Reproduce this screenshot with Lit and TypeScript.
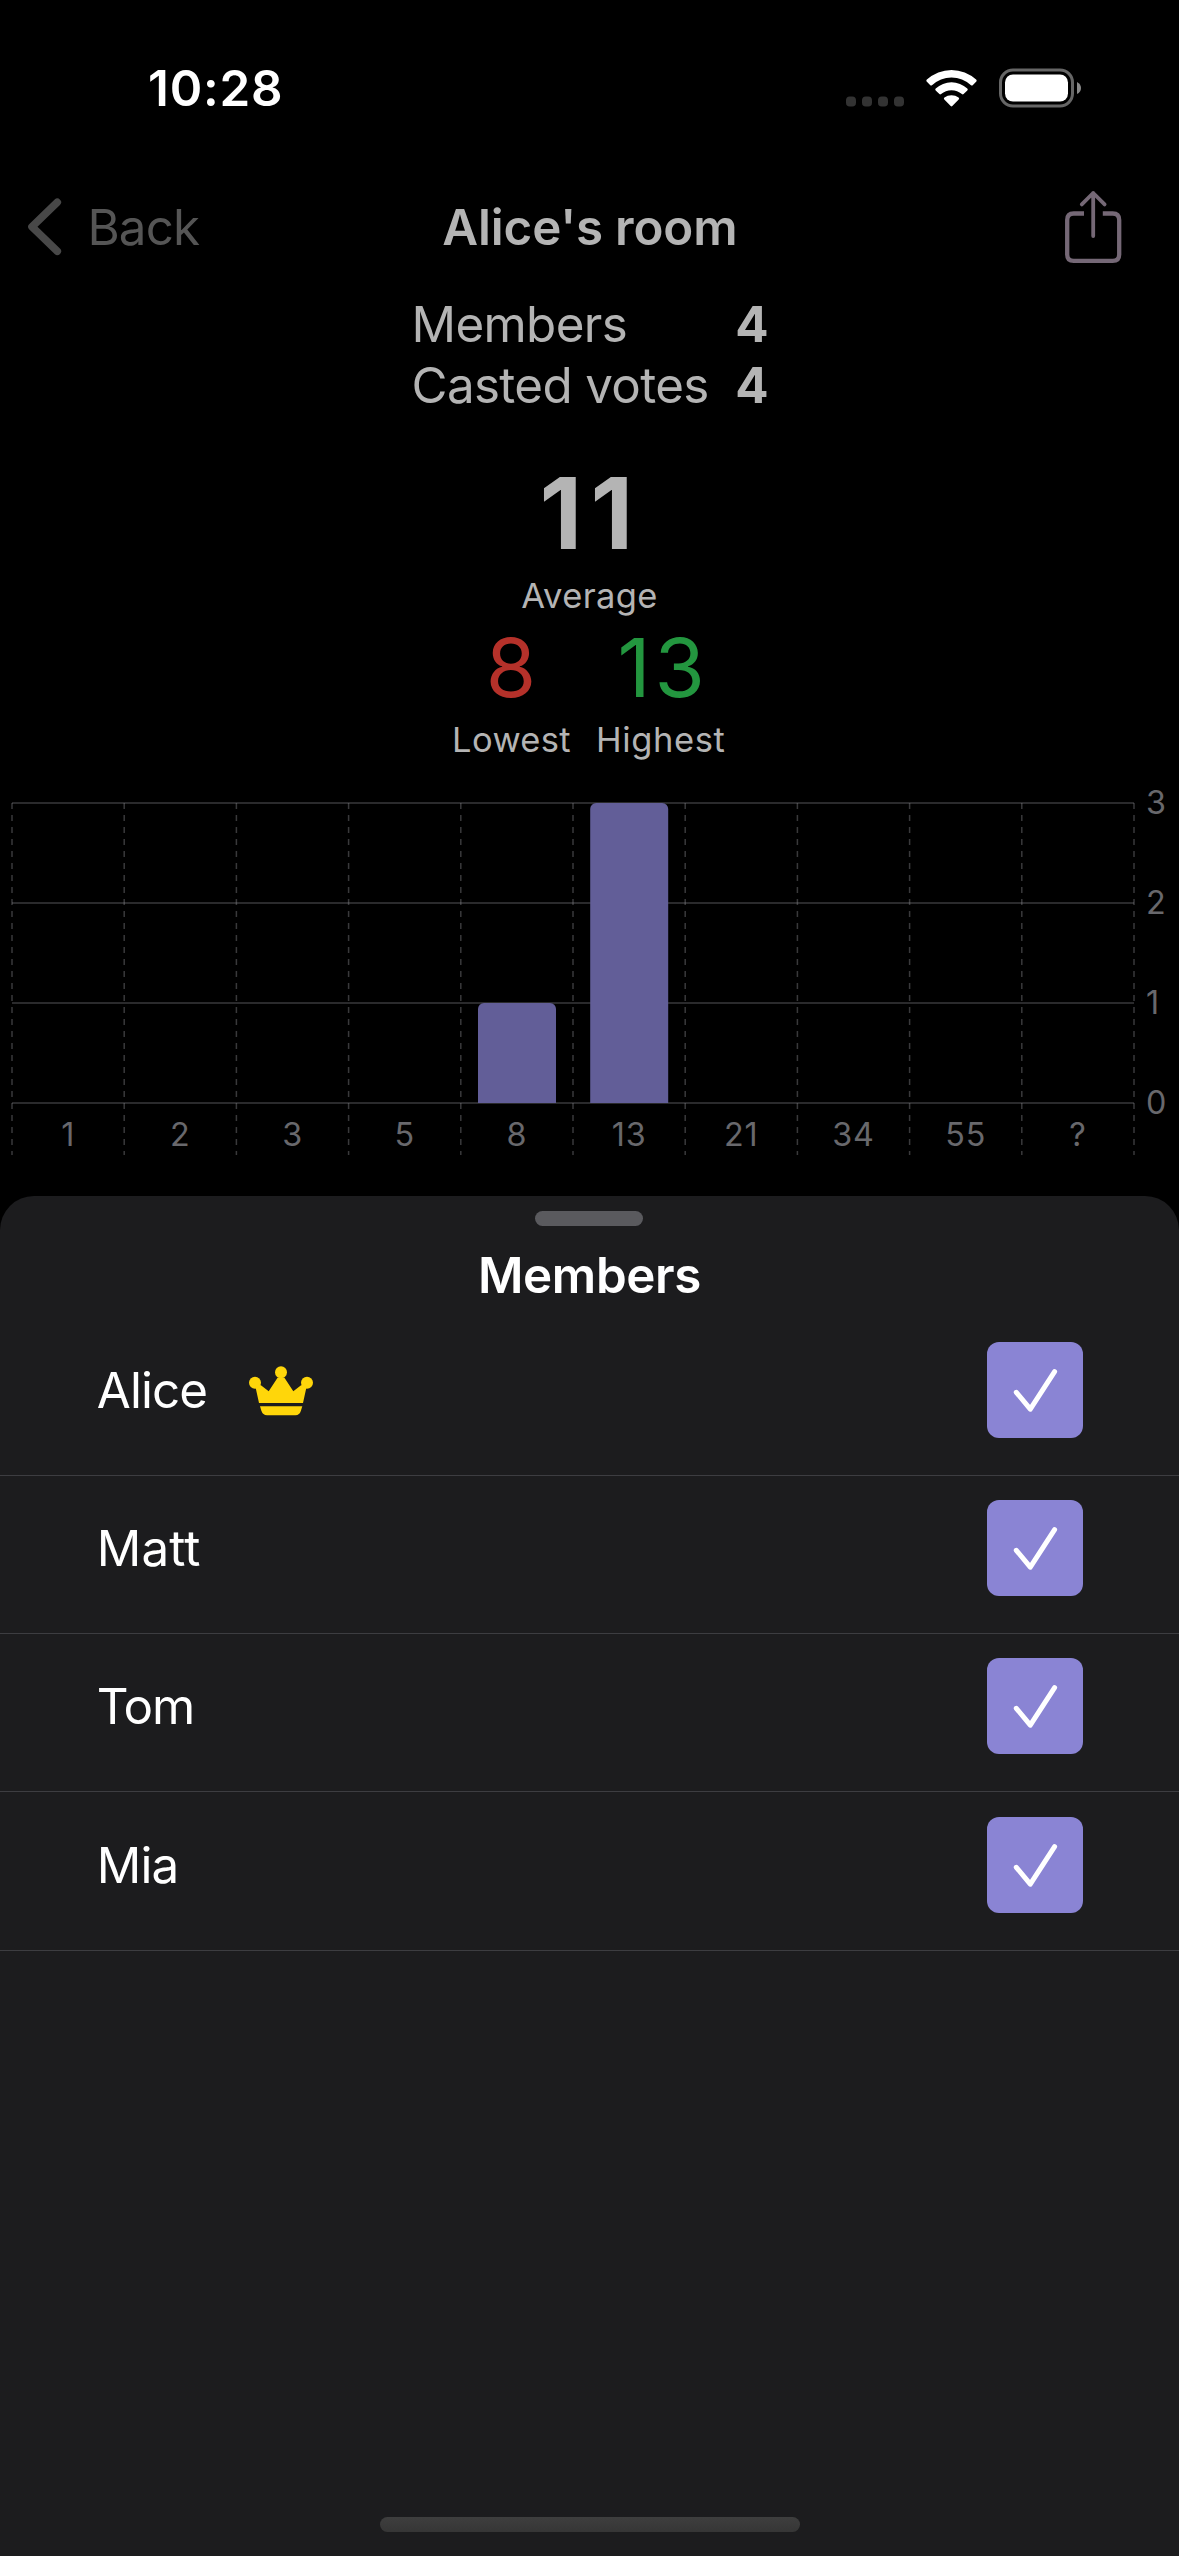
import { LitElement, html, svg, css } from "lit";
import { customElement } from "lit/decorators.js";

interface Member {
  name: string;
  owner: boolean;
  tracking: number;
}

const MEMBERS: Member[] = [
  { name: "Alice", owner: true, tracking: -0.9 },
  { name: "Matt", owner: false, tracking: 0.1 },
  { name: "Tom", owner: false, tracking: -1.2 },
  { name: "Mia", owner: false, tracking: -0.9 },
];

const CARDS = ["1", "2", "3", "5", "8", "13", "21", "34", "55", "?"];
const VOTES = [0, 0, 0, 0, 1, 3, 0, 0, 0, 0];
const LEVELS = [3, 2, 1, 0];

@customElement("vote-chart")
export class VoteChart extends LitElement {
  static styles = css`
    :host {
      display: block;
    }
    svg {
      display: block;
    }
    .grid {
      stroke: #8e8e93;
      stroke-opacity: 0.4;
      stroke-width: 1.5;
      fill: none;
    }
    .dashed {
      stroke-dasharray: 6 6;
    }
    .bar {
      fill: #625e98;
    }
    .label {
      fill: #68686c;
      font: 400 32.3px Inter, "Liberation Sans", sans-serif;
      letter-spacing: 0.8px;
    }
    .middle {
      text-anchor: middle;
    }
  `;

  render() {
    const left = 12;
    const right = 1134;
    const top = 42;
    const unit = 100;
    const base = top + unit * 3;
    const step = (right - left) / CARDS.length;
    const inset = 17.2;
    const width = 78;
    return html`<svg width="1179" height="435" viewBox="0 0 1179 435">
      ${LEVELS.map((level) => {
        const y = base - level * unit;
        return svg`<line class="grid" x1=${left} x2=${right} y1=${y} y2=${y}></line>
          <text class="label" x="1146" y=${y + 10.8}>${level}</text>`;
      })}
      ${Array.from({ length: CARDS.length + 1 }, (_, i) => {
        const x = left + i * step;
        return svg`<line class="grid dashed" x1=${x} x2=${x} y1=${top} y2=${base + 52}></line>`;
      })}
      ${VOTES.map((count, i) => {
        if (!count) return null;
        const x = left + i * step + inset;
        const y = base - count * unit;
        return svg`<path class="bar" d="M${x} ${base}V${y + 6}a6 6 0 0 1 6 -6h${width - 12}a6 6 0 0 1 6 6V${base}z"></path>`;
      })}
      ${CARDS.map(
        (card, i) =>
          svg`<text class="label middle" x=${left + (i + 0.5) * step} y=${base + 43}>${card}</text>`
      )}
    </svg>`;
  }
}

@customElement("app-root")
export class AppRoot extends LitElement {
  static styles = css`
    :host {
      display: flex;
      flex-direction: column;
      width: 1179px;
      height: 2556px;
      overflow: hidden;
      background: #000;
      color: #b4b4b4;
      font: 400 49.3px Inter, "Liberation Sans", sans-serif;
      white-space: nowrap;
    }
    * {
      box-sizing: border-box;
    }
    svg {
      display: block;
      flex: none;
    }
    .status {
      display: flex;
      align-items: center;
      justify-content: space-between;
      height: 176px;
      padding: 0 98px 0 148px;
      color: #fff;
    }
    .indicators {
      margin-top: -1px;
    }
    .time {
      font-weight: 600;
      letter-spacing: 0.8px;
    }
    .nav {
      display: grid;
      grid-template-columns: 1fr auto 1fr;
      align-items: center;
      height: 102px;
      padding: 0 54px 0 24px;
    }
    .back {
      display: flex;
      align-items: center;
      gap: 23.5px;
      color: #555;
      letter-spacing: -0.9px;
    }
    .room {
      font-weight: 600;
      letter-spacing: -0.15px;
      transform: translateX(15.4px);
    }
    .share {
      justify-self: end;
    }
    .totals {
      display: grid;
      grid-template-columns: auto auto;
      justify-content: center;
      column-gap: 26.5px;
      padding: 15.7px 0 0 0.5px;
      line-height: 61px;
      letter-spacing: -0.65px;
    }
    .totals b {
      font-weight: 700;
    }
    .average,
    .extremes {
      display: flex;
      justify-content: center;
    }
    .average {
      flex-direction: column;
      align-items: center;
      margin-top: 36.3px;
    }
    .mean {
      padding-left: 2px;
      font-size: 99px;
      font-weight: 700;
      line-height: 122px;
      letter-spacing: 8.3px;
    }
    .caption {
      font-size: 34.5px;
      line-height: 43px;
      letter-spacing: 0.35px;
    }
    .wide {
      letter-spacing: 0.6px;
    }
    .extremes {
      gap: 25px;
      padding-right: 1.5px;
    }
    .extreme {
      display: flex;
      flex-direction: column;
      align-items: center;
    }
    .figure {
      font-size: 81.5px;
      line-height: 101px;
    }
    .low {
      padding-right: 1px;
      color: #b5312a;
    }
    .high {
      color: #23963f;
      letter-spacing: 3.85px;
      padding-left: 5px;
    }
    .sheet {
      display: flex;
      flex-direction: column;
      align-items: center;
      flex: 1;
      padding-top: 15px;
      border-radius: 34px 34px 0 0;
      background: #1c1c1e;
      color: #fff;
    }
    .grabber {
      width: 108px;
      height: 15px;
      margin-right: 1px;
      border-radius: 8px;
      background: #5a5a5e;
    }
    .heading {
      margin-top: 18.7px;
      font-weight: 600;
      line-height: 61px;
      letter-spacing: -0.35px;
    }
    .list {
      width: 100%;
      margin-top: 12px;
    }
    .row {
      display: flex;
      align-items: center;
      height: 158px;
      padding: 0 96px 12px 96.8px;
      border-bottom: 1px solid #3d3d41;
    }
    .row:last-child {
      height: 159px;
    }
    .crown {
      margin: 1.5px 0 0 41.5px;
    }
    .check {
      margin-left: auto;
      border-radius: 12px;
      background: #8a84d4;
    }
    .home {
      width: 420px;
      height: 15px;
      margin: auto 0 24px;
      border-radius: 8px;
      background: linear-gradient(#3e3e3e, #363636);
    }
  `;

  private renderStatus() {
    return html`<div class="status">
      <span class="time">10:28</span>
      <svg class="indicators" width="235" height="40" viewBox="0 0 235 40">
        <g fill="#333">
          <rect x="0" y="28.5" width="10" height="10" rx="3.8"></rect>
          <rect x="16" y="28.5" width="10" height="10" rx="3.8"></rect>
          <rect x="32" y="28.5" width="10" height="10" rx="3.8"></rect>
          <rect x="48" y="28.5" width="10" height="10" rx="3.8"></rect>
        </g>
        <g fill="#fff">
          <path d="M80.9 11.6Q79.8 12.7 80.9 13.8L84.3 17.2Q85.1 18 86 17.2A28.4 28.4 0 0 1 125 17.2Q125.9 18 126.7 17.2L130.1 13.8Q131.2 12.7 130.1 11.6A36 36 0 0 0 80.9 11.6z"></path>
          <path d="M89.7 20.4Q88.7 21.5 89.7 22.5L93.4 26.1Q94.2 26.8 95.1 26.1A16 16 0 0 1 115.9 26.1Q116.8 26.8 117.6 26.1L121.3 22.5Q122.3 21.5 121.3 20.4A23.6 23.6 0 0 0 89.7 20.4z"></path>
          <path d="M98.4 29.6Q97.3 30.6 98.3 31.6L104.7 38Q105.5 38.8 106.3 38L112.7 31.6Q113.7 30.6 112.6 29.6A11.5 11.5 0 0 0 98.4 29.6z"></path>
        </g>
        <rect x="154.5" y="2" width="72" height="36" rx="12.5" fill="none" stroke="#666" stroke-width="3"></rect>
        <rect x="159" y="6.5" width="63" height="27" rx="8" fill="#fff"></rect>
        <path d="M231 14Q235 16 235 20Q235 24 231 26z" fill="#8a8a8a"></path>
      </svg>
    </div>`;
  }

  private renderNav() {
    return html`<div class="nav">
      <div class="back">
        <svg width="40" height="64" viewBox="0 0 40 64">
          <path d="M33.3 7.3L8 31.8L33.3 56.3" fill="none" stroke="#484848" stroke-width="7.6" stroke-linecap="round" stroke-linejoin="round"></path>
        </svg>
        <span>Back</span>
      </div>
      <div class="room">Alice's room</div>
      <svg class="share" width="64" height="80" viewBox="0 0 64 80" fill="none" stroke="#756876" stroke-width="4.3">
        <path d="M23 26.5H12.7Q6.2 26.5 6.2 33V67.4Q6.2 73.9 12.7 73.9H51.7Q58.2 73.9 58.2 67.4V33Q58.2 26.5 51.7 26.5H41.8"></path>
        <path d="M32.2 6V49M20.8 17.4L32.2 6L43.6 17.4" stroke-width="3.8" stroke-linecap="round" stroke-linejoin="round"></path>
      </svg>
    </div>`;
  }

  private renderMember(member: Member) {
    return html`<div class="row">
      <span style="letter-spacing:${member.tracking}px">${member.name}</span>
      ${member.owner
        ? html`<svg class="crown" width="64" height="50" viewBox="0 0 64 50" fill="#ffd60a">
            <circle cx="6" cy="16.7" r="6"></circle>
            <circle cx="32" cy="6.2" r="6"></circle>
            <circle cx="58" cy="16.7" r="6"></circle>
            <path d="M6.7 22L10 37H54L57.3 22L52.4 19L44.3 25.2L35.3 11.5H28.7L19.7 25.2L11.6 19z"></path>
            <path d="M11 40.2H53.3L52 44.5Q50.5 49.3 46.5 49.3H18Q13.8 49.3 12.3 44.5z"></path>
          </svg>`
        : null}
      <svg class="check" width="96" height="96" viewBox="0 0 96 96">
        <path d="M29.3 50.3L43.3 67.2L67.6 29.6" fill="none" stroke="#fff" stroke-width="5" stroke-linecap="round" stroke-linejoin="round"></path>
      </svg>
    </div>`;
  }

  render() {
    return html`
      ${this.renderStatus()} ${this.renderNav()}
      <div class="totals">
        <span>Members</span><b>4</b>
        <span>Casted votes</span><b>4</b>
      </div>
      <div class="average">
        <span class="mean">11</span>
        <span class="caption">Average</span>
      </div>
      <div class="extremes">
        <div class="extreme">
          <span class="figure low">8</span>
          <span class="caption">Lowest</span>
        </div>
        <div class="extreme">
          <span class="figure high">13</span>
          <span class="caption wide">Highest</span>
        </div>
      </div>
      <vote-chart></vote-chart>
      <div class="sheet">
        <div class="grabber"></div>
        <div class="heading">Members</div>
        <div class="list">${MEMBERS.map((m) => this.renderMember(m))}</div>
        <div class="home"></div>
      </div>
    `;
  }
}
